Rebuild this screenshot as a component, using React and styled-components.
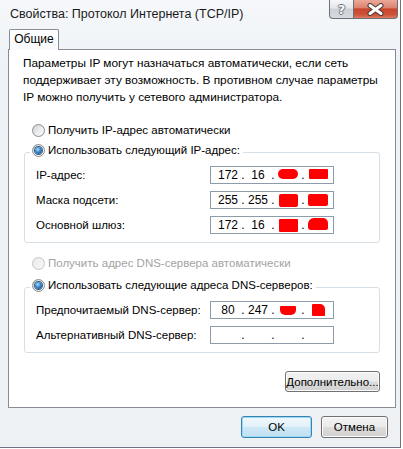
import React from 'react'
import styled, { createGlobalStyle, css } from 'styled-components'

const GlobalStyle = createGlobalStyle`
html,body{margin:0;padding:0;background:#fff;}
body{font-family:"Liberation Sans",Arial,sans-serif;font-size:11.5px;color:#000;}
*{box-sizing:border-box;}
`;

const Window = styled.div`
width:401px;
height:448px;
border-right:1px solid #6d7480;
border-bottom:1px solid #6d7480;
background:linear-gradient(180deg,#f6f8fb 0px,#eef2f6 60px,#eef1f4 100%);
display:flex;
flex-direction:column;
`;

const TitleBar = styled.div`
height:29px;
display:flex;
justify-content:space-between;
align-items:flex-start;
`;

const Title = styled.span`
font-size:12.5px;
margin:7px 0 0 10px;
color:#1a1a1a;
`;

const CaptionButtons = styled.div`
display:flex;
margin-right:2px;
`;

const CaptionButton = styled.div`
height:19px;
display:flex;
align-items:center;
justify-content:center;
border:1px solid #6b7079;
border-top:none;
${({$kind})=>$kind==='close'?css`
width:44px;
border-left:none;
border-radius:0 0 4px 0;
background:linear-gradient(180deg,#eaa999 0%,#dc8470 42%,#c8452d 50%,#cc5238 80%,#dd7a5e 100%);
`:css`
width:25px;
border-radius:0 0 0 4px;
background:linear-gradient(180deg,#f5f6f8 0%,#e3e6ea 45%,#cdd1d7 50%,#d6d9de 100%);
`}
`;

const HelpGlyph = styled.span`
font-family:"DejaVu Sans",sans-serif;
font-weight:bold;
font-size:13px;
color:#f6f6f6;
text-shadow:-1px 0 #707580,1px 0 #707580,0 -1px #707580,0 1px #707580;
line-height:1;
`;

const Client = styled.div`
flex:1;
display:flex;
flex-direction:column;
`;

const TabStrip = styled.div`
height:20px;
padding-left:9px;
display:flex;
align-items:flex-end;
`;

const Tab = styled.div`
width:50px;
height:21px;
margin-bottom:-1px;
position:relative;
z-index:1;
border:1px solid #898c95;
border-bottom:none;
border-radius:2px 2px 0 0;
background:linear-gradient(180deg,#ffffff 0%,#f7f9fc 100%);
display:flex;
align-items:center;
justify-content:center;
padding-bottom:2px;
font-size:12px;
`;

const Panel = styled.div`
width:388px;
height:359px;
margin-left:8px;
border:1px solid #898c95;
background:#fff;
display:flex;
flex-direction:column;
`;

const Intro = styled.p`
margin:0;
padding:5px 15px 0 14px;
line-height:17px;
white-space:nowrap;
font-size:11.8px;
`;

const RadioRow = styled.label`
display:flex;
align-items:center;
gap:3px;
height:16px;
margin:${({$top})=>$top}px 0 0 23px;
color:${({$disabled})=>$disabled?'#a3a3a3':'#000'};
`;

const Radio = styled.span`
width:13px;
height:13px;
border-radius:50%;
flex:none;
display:flex;
align-items:center;
justify-content:center;
border:1px solid ${({$disabled})=>$disabled?'#c4c6c8':'#8a8c8e'};
background:${({$disabled})=>$disabled
  ?'linear-gradient(135deg,#e9eaeb,#f7f7f7)'
  :'linear-gradient(135deg,#cfd1d3 0%,#eef0f1 60%,#fafafa 100%)'};
&::after{
  content:"";
  display:${({$checked})=>$checked?'block':'none'};
  width:7px;
  height:7px;
  border-radius:50%;
  background:radial-gradient(circle at 40% 35%,#a8dcff 0%,#3b86c6 45%,#0f3d66 100%);
  box-shadow:0 0 0 1px #2e5f8a;
}
`;

const Group = styled.fieldset`
margin:${({$top})=>$top}px 15px 0 15px;
padding:0 0 8px 5px;
border:1px solid #d5dfe5;
border-radius:3px;
min-width:0;
`;

const Legend = styled.legend`
padding:0 3px 4px 2px;
display:flex;
align-items:center;
gap:3px;
height:20px;
`;

const Rows = styled.div`
display:flex;
flex-direction:column;
gap:7px;
margin-top:4px;
padding-left:6px;
`;

const FieldRow = styled.div`
display:flex;
align-items:center;
height:18px;
`;

const Label = styled.span`
width:174px;
flex:none;
white-space:nowrap;
`;

const IpBox = styled.div`
width:124px;
height:18px;
border:1px solid #8e9bab;
background:#fff;
display:flex;
align-items:center;
padding-left:5px;
font-size:12px;
`;

const Octet = styled.span`
width:24px;
display:flex;
justify-content:center;
align-items:center;
`;

const Dot = styled.span`
width:6px;
text-align:center;
`;

const Blot = styled.span`
display:block;
background:#ff0000;
width:${({$w})=>$w}px;
height:${({$h})=>$h}px;
border-radius:${({$r})=>$r};
margin-top:${({$dy})=>$dy||0}px;
`;

const PanelFooter = styled.div`
display:flex;
justify-content:flex-end;
margin:18px 15px 0 0;
`;

const DialogButtons = styled.div`
display:flex;
justify-content:flex-end;
gap:9px;
margin:8px 12px 0 0;
`;

const Button = styled.button`
font-family:inherit;
font-size:11.5px;
color:#000;
height:${({$h})=>$h||22}px;
width:${({$w})=>$w}px;
padding:0;
border-radius:3px;
white-space:nowrap;
border:1px solid ${({$default})=>$default?'#3c7fb1':'#707070'};
background:${({$default})=>$default
  ?'linear-gradient(180deg,#f0f8fc 0%,#e3f1f9 48%,#cde7f5 52%,#c2e1f2 100%)'
  :'linear-gradient(180deg,#f3f3f3 0%,#ebebeb 48%,#dddddd 52%,#d0d0d0 100%)'};
box-shadow:inset 0 0 0 1px ${({$default})=>$default?'#94dcf7':'#fcfcfc'};
`;

const ipRows = [
  {label:'IP-адрес:', octets:['172','16',{w:20,h:10,r:'5px',dy:-2},{w:19,h:10,r:'1px',dy:-2}]},
  {label:'Маска подсети:', octets:['255','255',{w:19,h:13,r:'2px'},{w:20,h:12,r:'2px'}]},
  {label:'Основной шлюз:', octets:['172','16',{w:19,h:13,r:'1px'},{w:20,h:12,r:'6px 5px 2px 3px',dy:-2}]},
];

const dnsRows = [
  {label:'Предпочитаемый DNS-сервер:', octets:['80','247',{w:16,h:9,r:'1px 1px 5px 5px'},{w:13,h:12,r:'1px 5px 1px 1px'}]},
  {label:'Альтернативный DNS-сервер:', octets:['','','','']},
];

function IpField({octets}) {
  return (
    <IpBox>
      {octets.map((o,i)=>(
        <React.Fragment key={i}>
          {i>0 && <Dot>.</Dot>}
          <Octet>{typeof o==='string'?o:<Blot $w={o.w} $h={o.h} $r={o.r} $dy={o.dy}/>}</Octet>
        </React.Fragment>
      ))}
    </IpBox>
  )
}

function FieldRows({rows}) {
  return (
    <Rows>
      {rows.map(r=>(
        <FieldRow key={r.label}>
          <Label>{r.label}</Label>
          <IpField octets={r.octets}/>
        </FieldRow>
      ))}
    </Rows>
  )
}

export default function App() {
  return (
    <>
      <GlobalStyle/>
      <Window>
        <TitleBar>
          <Title>Свойства: Протокол Интернета (TCP/IP)</Title>
          <CaptionButtons>
            <CaptionButton $kind="help"><HelpGlyph>?</HelpGlyph></CaptionButton>
            <CaptionButton $kind="close">
              <svg width="19" height="13" viewBox="0 0 19 13">
                <path d="M4 2.5 L15 10.5 M15 2.5 L4 10.5" stroke="#4a3a36" strokeWidth="5" strokeLinecap="round"/>
                <path d="M4 2.5 L15 10.5 M15 2.5 L4 10.5" stroke="#ffffff" strokeWidth="3" strokeLinecap="round"/>
              </svg>
            </CaptionButton>
          </CaptionButtons>
        </TitleBar>
        <Client>
          <TabStrip><Tab>Общие</Tab></TabStrip>
          <Panel>
            <Intro>
              Параметры IP могут назначаться автоматически, если сеть<br/>
              поддерживает эту возможность. В противном случае параметры<br/>
              IP можно получить у сетевого администратора.
            </Intro>
            <RadioRow $top={16}><Radio/>Получить IP-адрес автоматически</RadioRow>
            <Group $top={4}>
              <Legend><Radio $checked/>Использовать следующий IP-адрес:</Legend>
              <FieldRows rows={ipRows}/>
            </Group>
            <RadioRow $top={12} $disabled><Radio $disabled/>Получить адрес DNS-сервера автоматически</RadioRow>
            <Group $top={6}>
              <Legend><Radio $checked/>Использовать следующие адреса DNS-серверов:</Legend>
              <FieldRows rows={dnsRows}/>
            </Group>
            <PanelFooter><Button $w={95} $h={21}>Дополнительно...</Button></PanelFooter>
          </Panel>
          <DialogButtons>
            <Button $default $w={71}>OK</Button>
            <Button $w={67}>Отмена</Button>
          </DialogButtons>
        </Client>
      </Window>
    </>
  )
}
